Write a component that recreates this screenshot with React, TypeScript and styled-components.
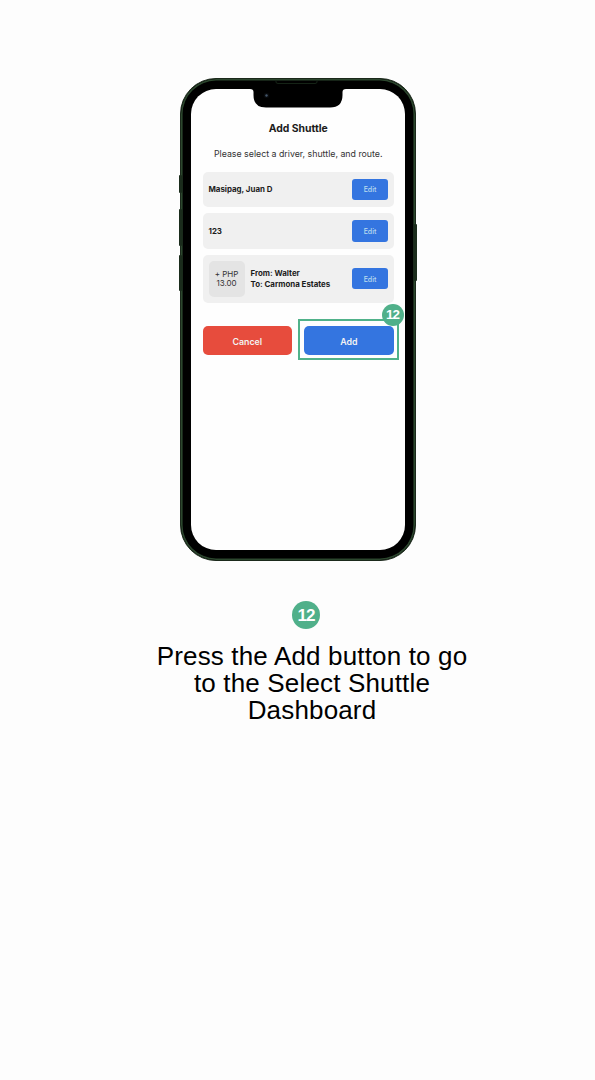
import React from "react";
import styled, { createGlobalStyle } from "styled-components";

const Global = createGlobalStyle`
  * { box-sizing: border-box; }
  body { margin: 0; background: #fdfdfd; }
`;

const Page = styled.main`
  width: 595px;
  height: 1080px;
  padding-top: 78px;
  overflow: hidden;
  background: #fdfdfd;
  font-family: Inter, sans-serif;
  color: #1c1c1c;
`;

const Phone = styled.section`
  position: relative;
  width: 235.5px;
  height: 482.5px;
  margin-left: 180px;
  padding: 10px 9.5px 10px 10px;
  border: 1px solid #1b291b;
  border-radius: 36px;
  background: #000;
  box-shadow: inset 0 0 0 1.6px #2c472e;
`;

const SideKey = styled.i<{ $top: number; $height: number; $right?: boolean }>`
  position: absolute;
  top: ${(p) => p.$top}px;
  ${(p) => (p.$right ? "right: -2.5px;" : "left: -2.5px;")}
  width: 3px;
  height: ${(p) => p.$height}px;
  border-radius: 1px;
  background: #1b2c1c;
`;

const Notch = styled.svg`
  position: absolute;
  left: 68px;
  top: 1px;
  width: 98px;
  height: 30px;
`;

const Screen = styled.div`
  height: 100%;
  padding: 32.5px 11px 0 11.5px;
  border-radius: 25px;
  background: #fefefe;
`;

const Title = styled.h1`
  margin: 0;
  text-align: center;
  font: 700 10.4px/14px Inter, sans-serif;
`;

const Hint = styled.p`
  margin: 11px -8px 11px;
  text-align: center;
  white-space: nowrap;
  font-size: 8.8px;
  line-height: 14px;
  color: #333;
`;

const Choices = styled.div`
  display: flex;
  flex-direction: column;
  gap: 6px;
`;

const Choice = styled.div<{ $tall?: boolean }>`
  display: flex;
  align-items: center;
  height: ${(p) => (p.$tall ? 48 : 35.5)}px;
  padding: 0 6px;
  border-radius: 5px;
  background: #f0f0f0;
`;

const Label = styled.div`
  flex: 1;
  padding-top: 1px;
  white-space: nowrap;
  font-size: 7.9px;
  line-height: 11px;
  font-weight: 700;
`;

const Fare = styled.div`
  width: 36px;
  height: 36px;
  margin-right: 6px;
  padding-top: 9px;
  border-radius: 5px;
  background: #e4e4e4;
  text-align: center;
  font-size: 8px;
  line-height: 9.5px;
  color: #333;
`;

const EditButton = styled.button`
  flex: none;
  width: 36px;
  height: 21.5px;
  padding: 1px 0 0;
  border: 0;
  border-radius: 3px;
  background: #3475e0;
  color: #b9dcef;
  font: 500 7px Inter, sans-serif;
`;

const Actions = styled.div`
  display: flex;
  gap: 12px;
  margin-top: 23px;
`;

const Action = styled.button<{ $danger?: boolean }>`
  display: block;
  width: 89.5px;
  height: 29.5px;
  padding: 1.5px 0 0;
  border: 0;
  border-radius: 5px;
  background: ${(p) => (p.$danger ? "#e74c3d" : "#3475e0")};
  color: #f2f2f2;
  font: 600 8.8px Inter, sans-serif;
`;

const Highlight = styled.div`
  position: relative;
  height: 29.5px;
  &::before {
    content: "";
    position: absolute;
    inset: -6.5px -5.5px -5px -6.5px;
    border: 2px solid #50b28a;
  }
`;

const Badge = styled.span<{ $size: number }>`
  display: flex;
  align-items: center;
  justify-content: center;
  width: ${(p) => p.$size}px;
  height: ${(p) => p.$size}px;
  padding-top: 1px;
  border-radius: 50%;
  background: #50b08a;
  color: #fff;
  font: 700 ${(p) => p.$size * 0.61}px/1 "Liberation Sans", sans-serif;
  letter-spacing: -0.9px;
`;

const PinnedBadge = styled(Badge)`
  position: absolute;
  right: -10px;
  top: -22px;
`;

const Step = styled.section`
  width: 330px;
  margin: 40.5px 0 0 147px;
`;

const StepBadge = styled(Badge)`
  margin-left: 145px;
`;

const Caption = styled.p`
  margin: 14px 0 0;
  text-align: center;
  font: 26px/27px "Liberation Sans", sans-serif;
  letter-spacing: 0.16px;
  color: #000;
`;

export default function App() {
  return (
    <Page>
      <Global />
      <Phone>
        <SideKey $top={96} $height={18} />
        <SideKey $top={130} $height={37} />
        <SideKey $top={176} $height={36} />
        <SideKey $top={145} $height={57} $right />
        <Screen>
          <Title>Add Shuttle</Title>
          <Hint>Please select a driver, shuttle, and route.</Hint>
          <Choices>
            <Choice>
              <Label>Masipag, Juan D</Label>
              <EditButton>Edit</EditButton>
            </Choice>
            <Choice>
              <Label>123</Label>
              <EditButton>Edit</EditButton>
            </Choice>
            <Choice $tall>
              <Fare>+ PHP<br />13.00</Fare>
              <Label>From: Walter<br />To: Carmona Estates</Label>
              <EditButton>Edit</EditButton>
            </Choice>
          </Choices>
          <Actions>
            <Action $danger>Cancel</Action>
            <Highlight>
              <Action>Add</Action>
              <PinnedBadge $size={22}>12</PinnedBadge>
            </Highlight>
          </Actions>
        </Screen>
        <Notch viewBox="0 0 98 30">
          <path d="M0 9H1Q4.5 9 4.5 12V15Q4.5 27.5 17 27.5H81Q93.5 27.5 93.5 15V12Q93.5 9 97 9H98V5H0Z" fill="#000" />
          <path d="M27 1V2Q27 3.5 29 3.5H66Q68 3.5 68 2V1" fill="none" stroke="#1b2c1c" strokeWidth="0.8" />
          <circle cx="17.5" cy="15.5" r="2.8" fill="#07090b" />
          <circle cx="17.5" cy="15.5" r="1.2" fill="#44566a" />
        </Notch>
      </Phone>
      <Step>
        <StepBadge $size={28}>12</StepBadge>
        <Caption>Press the Add button to go<br />to the Select Shuttle<br />Dashboard</Caption>
      </Step>
    </Page>
  );
}
